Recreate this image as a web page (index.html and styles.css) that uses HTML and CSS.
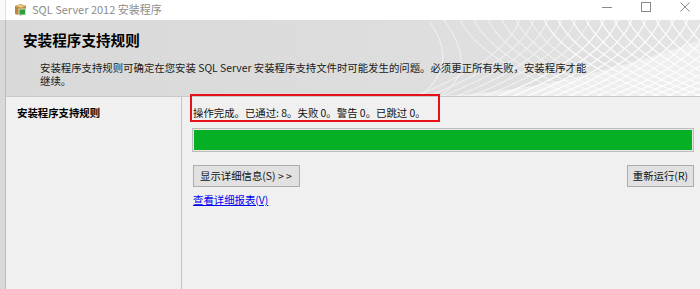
FILE: index.html
```html
<!DOCTYPE html>
<html lang="zh-CN">
<head>
<meta charset="utf-8">
<title>SQL Server 2012 安装程序</title>
<link rel="stylesheet" href="styles.css">
</head>
<body>
<div class="screen">
  <div class="edge">
    <div class="edge-top"></div>
    <div class="edge-bottom"></div>
  </div>
  <div class="window">
    <div class="titlebar">
      <svg class="app-icon" width="13" height="13" viewBox="0 0 13 13">
        <path d="M1 3 L6.5 1 L12 3 L12 11 L6.5 12.5 L1 11 Z" fill="#b8893c"/>
        <path d="M1 3 L6.5 5 L12 3 L6.5 1 Z" fill="#dcb46a"/>
        <path d="M6.5 5 L6.5 12.5" stroke="#8a6526" stroke-width="0.8"/>
        <path d="M3.6 2 L9 4" stroke="#f1dba6" stroke-width="1"/>
        <rect x="5" y="6" width="6.5" height="6" fill="#2f9e3f" stroke="#e9f5ea" stroke-width="0.8"/>
      </svg>
      <span class="title-text">SQL Server 2012 安装程序</span>
      <div class="controls">
        <svg class="ctl" width="12" height="12" viewBox="0 0 12 12"><path d="M1 6.5 H11" stroke="#8a8a8a" stroke-width="1"/></svg>
        <svg class="ctl" width="12" height="12" viewBox="0 0 12 12"><rect x="1.5" y="1.5" width="9" height="9" fill="none" stroke="#8a8a8a" stroke-width="1"/></svg>
        <svg class="ctl" width="12" height="12" viewBox="0 0 12 12"><path d="M1.5 1.5 L10.5 10.5 M10.5 1.5 L1.5 10.5" stroke="#8a8a8a" stroke-width="1"/></svg>
      </div>
    </div>
    <div class="header">
      <svg class="mesh" width="300" height="76" viewBox="0 0 300 76">
        <path d="M40 76 C 140 72, 230 45, 300 20 L300 76 Z" fill="#f4f4f4" opacity="0.7"/>
        <g fill="none" stroke="#ffffff" stroke-width="1.1" opacity="0.55">
          <path d="M60 0 Q82 42 175 76"/><path d="M74 0 Q96 42 189 76"/><path d="M88 0 Q110 42 203 76"/>
          <path d="M102 0 Q124 42 217 76"/><path d="M116 0 Q138 42 231 76"/><path d="M130 0 Q152 42 245 76"/>
          <path d="M44 0 Q80 50 40 76"/><path d="M30 2 Q60 45 20 76"/>
          <path d="M120 0 Q102 42 15 76"/><path d="M134 0 Q116 42 29 76"/><path d="M148 0 Q130 42 43 76"/>
          <path d="M162 0 Q144 42 57 76"/><path d="M176 0 Q158 42 71 76"/><path d="M190 0 Q172 42 85 76"/>
        </g>
        <g fill="none" stroke="#ffffff" stroke-width="1.2" opacity="0.95">
          <path d="M144 0 Q166 42 259 76"/><path d="M158 0 Q180 42 273 76"/><path d="M172 0 Q194 42 287 76"/>
          <path d="M186 0 Q208 42 301 76"/><path d="M200 0 Q222 42 315 76"/><path d="M214 0 Q236 42 329 76"/>
          <path d="M228 0 Q250 42 343 76"/><path d="M242 0 Q264 42 357 76"/><path d="M256 0 Q278 42 371 76"/>
          <path d="M270 0 Q292 42 385 76"/><path d="M284 0 Q306 42 399 76"/>
          <path d="M204 0 Q186 42 99 76"/><path d="M218 0 Q200 42 113 76"/><path d="M232 0 Q214 42 127 76"/>
          <path d="M246 0 Q228 42 141 76"/><path d="M260 0 Q242 42 155 76"/><path d="M274 0 Q256 42 169 76"/>
          <path d="M288 0 Q270 42 183 76"/><path d="M302 0 Q284 42 197 76"/><path d="M316 0 Q298 42 211 76"/>
          <path d="M330 0 Q312 42 225 76"/><path d="M344 0 Q326 42 239 76"/><path d="M358 0 Q340 42 253 76"/>
          <path d="M372 0 Q354 42 267 76"/><path d="M386 0 Q368 42 281 76"/><path d="M400 0 Q382 42 295 76"/>
        </g>
      </svg>
      <h1 class="page-title">安装程序支持规则</h1>
      <p class="page-desc">安装程序支持规则可确定在您安装 SQL Server 安装程序支持文件时可能发生的问题。必须更正所有失败，安装程序才能<br>继续。</p>
    </div>
    <div class="body">
      <nav class="sidebar">
        <div class="nav-item">安装程序支持规则</div>
      </nav>
      <main class="main">
        <div class="status">操作完成。已通过: 8。失败 0。警告 0。已跳过 0。</div>
        <div class="progress"><div class="progress-fill" style="width:100%"></div></div>
        <div class="actions">
          <button class="btn btn-wide">显示详细信息(S) &gt; &gt;</button>
          <button class="btn">重新运行(R)</button>
        </div>
        <a class="report-link" href="#">查看详细报表(V)</a>
      </main>
    </div>
  </div>
  <div class="highlight"></div>
</div>
</body>
</html>
```
FILE: styles.css
```css
* { box-sizing: border-box; }
html, body {
  margin: 0;
  padding: 0;
  width: 700px;
  height: 289px;
  overflow: hidden;
  background: #f0f0f0;
  font-family: "Noto Sans CJK SC", "Noto Sans", sans-serif;
  color: #000;
}
.screen {
  position: relative;
  display: flex;
  width: 700px;
  height: 289px;
}
.edge {
  width: 6px;
  display: flex;
  flex-direction: column;
}
.edge-top {
  height: 20px;
  background: #fafafa;
  border-right: 1px solid #e2e2e2;
}
.edge-bottom {
  flex: 1;
  background: #d9d9d9;
  border-right: 1px solid #bdbdbd;
}
.window {
  flex: 1;
  display: flex;
  flex-direction: column;
  min-width: 0;
}
.titlebar {
  height: 20px;
  background: #ffffff;
  display: flex;
  align-items: center;
  padding-left: 8px;
}
.app-icon { flex: none; margin-top: -1px; }
.title-text {
  margin-left: 5px;
  font-size: 11px;
  color: #8c8c8c;
  line-height: 20px;
  margin-top: -3px;
}
.controls {
  margin-left: auto;
  display: flex;
  gap: 27px;
  padding-right: 9px;
  margin-top: -6px;
}
.ctl { display: block; }
.header {
  position: relative;
  height: 77px;
  background: linear-gradient(90deg, #d9d9d9 0%, #dcdcdc 45%, #e0e0e0 75%, #e4e4e4 100%);
  border-bottom: 1px solid #c9c9c9;
  overflow: hidden;
  padding: 10px 20px 0 17px;
}
.mesh {
  position: absolute;
  right: 0;
  top: 0;
}
.page-title {
  position: relative;
  margin: 0;
  font-size: 14.6px;
  font-weight: bold;
  line-height: 20px;
}
.page-desc {
  position: relative;
  margin: 11px 0 0 17px;
  font-size: 10.4px;
  line-height: 13px;
  color: #1a1a1a;
}
.body {
  flex: 1;
  display: flex;
}
.sidebar {
  width: 176px;
  border-right: 1px solid #c4c4c4;
  padding: 9px 0 0 11px;
}
.nav-item {
  font-size: 10.4px;
  font-weight: bold;
  line-height: 14px;
}
.main {
  flex: 1;
  display: flex;
  flex-direction: column;
  padding: 9px 6px 0 10px;
}
.status {
  font-size: 10.4px;
  line-height: 14px;
  padding-left: 1px;
  color: #111;
}
.progress {
  margin-top: 8px;
  height: 24px;
  border: 1px solid #bcbcbc;
  background: #e6e6e6;
  padding: 1px;
}
.progress-fill {
  height: 100%;
  background: #06b025;
}
.actions {
  margin-top: 13px;
  display: flex;
  justify-content: space-between;
  padding-left: 1px;
}
.btn {
  height: 22px;
  padding: 0 5px;
  font-family: inherit;
  font-size: 10.4px;
  line-height: 20px;
  color: #111;
  background: #e1e1e1;
  border: 1px solid #adadad;
  border-radius: 0;
}
.btn-wide {
  width: 107px;
  text-align: left;
  padding-left: 6px;
}
.report-link {
  align-self: flex-start;
  margin: 6px 0 0 1px;
  font-size: 10.4px;
  line-height: 14px;
  color: #0000ee;
  text-decoration: underline;
}
.highlight {
  position: absolute;
  left: 190px;
  top: 94px;
  width: 250px;
  height: 28px;
  border: 2px solid #e8101a;
  pointer-events: none;
}
```
